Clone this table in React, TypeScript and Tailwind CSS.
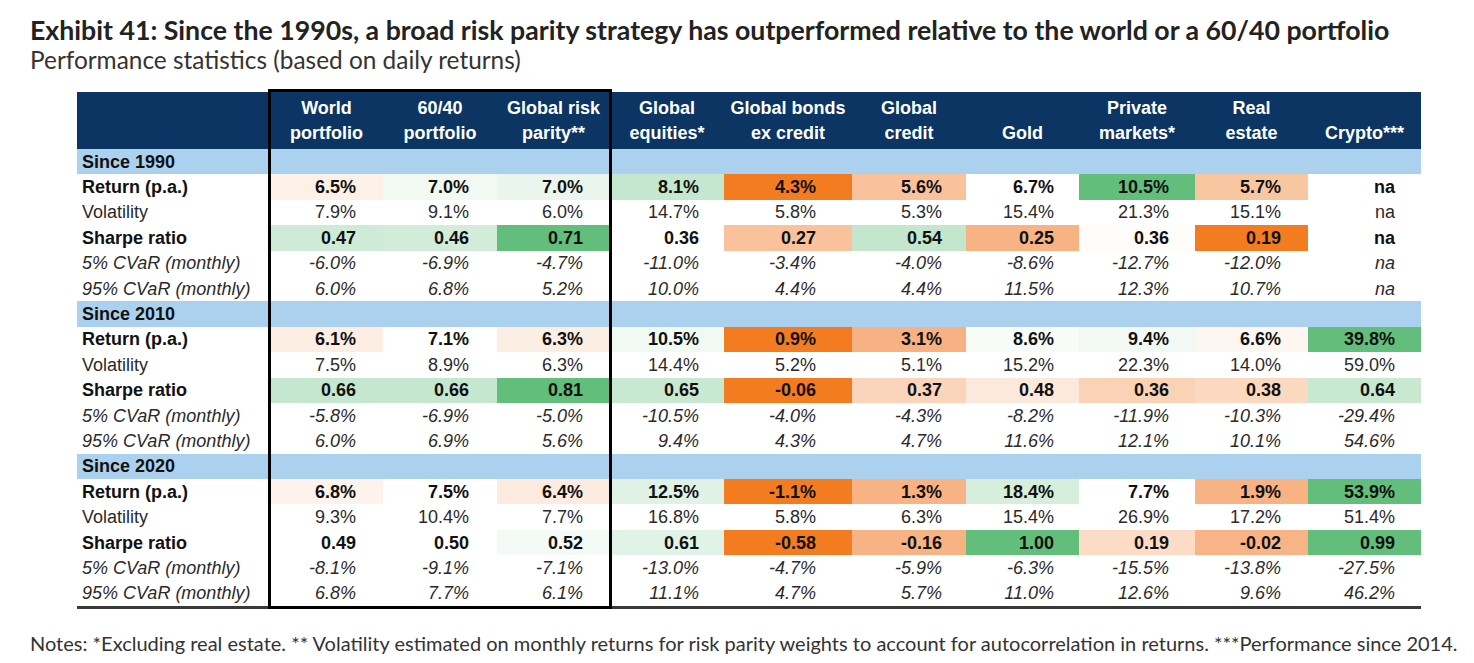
const GRID =
  "grid grid-cols-[193px_113px_114px_113px_114px_128px_114px_113px_116px_113px_113px]";

const PAD = [
  "pr-[27px]",
  "pr-[28px]",
  "pr-[27px]",
  "pr-[25px]",
  "pr-[36px]",
  "pr-[24px]",
  "pr-[25px]",
  "pr-[26px]",
  "pr-[27px]",
  "pr-[26px]",
];

const HEADERS = [
  ["World", "portfolio"],
  ["60/40", "portfolio"],
  ["Global risk", "parity**"],
  ["Global", "equities*"],
  ["Global bonds", "ex credit"],
  ["Global", "credit"],
  ["Gold"],
  ["Private", "markets*"],
  ["Real", "estate"],
  ["Crypto***"],
];

type Row = {
  label: string;
  style: "bold" | "normal" | "italic";
  values: string[];
  fills?: string[];
};

const W = "bg-white";

const SECTIONS: { title: string; rows: Row[] }[] = [
  {
    title: "Since 1990",
    rows: [
      {
        label: "Return (p.a.)",
        style: "bold",
        values: ["6.5%", "7.0%", "7.0%", "8.1%", "4.3%", "5.6%", "6.7%", "10.5%", "5.7%", "na"],
        fills: [
          "bg-[#fdf0e6]",
          "bg-[#f2f9f3]",
          "bg-[#eaf6ed]",
          "bg-[#c6e7cf]",
          "bg-[#f47c20]",
          "bg-[#f9c29c]",
          W,
          "bg-[#63be7b]",
          "bg-[#f9c6a2]",
          W,
        ],
      },
      {
        label: "Volatility",
        style: "normal",
        values: ["7.9%", "9.1%", "6.0%", "14.7%", "5.8%", "5.3%", "15.4%", "21.3%", "15.1%", "na"],
      },
      {
        label: "Sharpe ratio",
        style: "bold",
        values: ["0.47", "0.46", "0.71", "0.36", "0.27", "0.54", "0.25", "0.36", "0.19", "na"],
        fills: [
          "bg-[#cfebd7]",
          "bg-[#d3ecda]",
          "bg-[#63be7b]",
          W,
          "bg-[#f9c29c]",
          "bg-[#c3e6cc]",
          "bg-[#f8b384]",
          "bg-[#fffcfa]",
          "bg-[#f47c20]",
          W,
        ],
      },
      {
        label: "5% CVaR (monthly)",
        style: "italic",
        values: ["-6.0%", "-6.9%", "-4.7%", "-11.0%", "-3.4%", "-4.0%", "-8.6%", "-12.7%", "-12.0%", "na"],
      },
      {
        label: "95% CVaR (monthly)",
        style: "italic",
        values: ["6.0%", "6.8%", "5.2%", "10.0%", "4.4%", "4.4%", "11.5%", "12.3%", "10.7%", "na"],
      },
    ],
  },
  {
    title: "Since 2010",
    rows: [
      {
        label: "Return (p.a.)",
        style: "bold",
        values: ["6.1%", "7.1%", "6.3%", "10.5%", "0.9%", "3.1%", "8.6%", "9.4%", "6.6%", "39.8%"],
        fills: [
          "bg-[#fdede3]",
          W,
          "bg-[#fdeee4]",
          "bg-[#f1f9f3]",
          "bg-[#f47c20]",
          "bg-[#f8b183]",
          "bg-[#f8fcf9]",
          "bg-[#f2f9f4]",
          "bg-[#fef6f1]",
          "bg-[#63be7b]",
        ],
      },
      {
        label: "Volatility",
        style: "normal",
        values: ["7.5%", "8.9%", "6.3%", "14.4%", "5.2%", "5.1%", "15.2%", "22.3%", "14.0%", "59.0%"],
      },
      {
        label: "Sharpe ratio",
        style: "bold",
        values: ["0.66", "0.66", "0.81", "0.65", "-0.06", "0.37", "0.48", "0.36", "0.38", "0.64"],
        fills: [
          "bg-[#c6e7cf]",
          "bg-[#c6e7cf]",
          "bg-[#63be7b]",
          "bg-[#c9e8d1]",
          "bg-[#f47c20]",
          "bg-[#fad5bc]",
          "bg-[#fde9dc]",
          "bg-[#fad2b6]",
          "bg-[#fbd8c0]",
          "bg-[#c8e8d0]",
        ],
      },
      {
        label: "5% CVaR (monthly)",
        style: "italic",
        values: ["-5.8%", "-6.9%", "-5.0%", "-10.5%", "-4.0%", "-4.3%", "-8.2%", "-11.9%", "-10.3%", "-29.4%"],
      },
      {
        label: "95% CVaR (monthly)",
        style: "italic",
        values: ["6.0%", "6.9%", "5.6%", "9.4%", "4.3%", "4.7%", "11.6%", "12.1%", "10.1%", "54.6%"],
      },
    ],
  },
  {
    title: "Since 2020",
    rows: [
      {
        label: "Return (p.a.)",
        style: "bold",
        values: ["6.8%", "7.5%", "6.4%", "12.5%", "-1.1%", "1.3%", "18.4%", "7.7%", "1.9%", "53.9%"],
        fills: [
          "bg-[#fef3ec]",
          W,
          "bg-[#fdebdf]",
          "bg-[#e0f2e5]",
          "bg-[#f47c20]",
          "bg-[#f8b283]",
          "bg-[#d6eedc]",
          W,
          "bg-[#f8b283]",
          "bg-[#63be7b]",
        ],
      },
      {
        label: "Volatility",
        style: "normal",
        values: ["9.3%", "10.4%", "7.7%", "16.8%", "5.8%", "6.3%", "15.4%", "26.9%", "17.2%", "51.4%"],
      },
      {
        label: "Sharpe ratio",
        style: "bold",
        values: ["0.49", "0.50", "0.52", "0.61", "-0.58", "-0.16", "1.00", "0.19", "-0.02", "0.99"],
        fills: [
          W,
          W,
          "bg-[#f4faf5]",
          "bg-[#e1f2e6]",
          "bg-[#f47c20]",
          "bg-[#f8b385]",
          "bg-[#63be7b]",
          "bg-[#fcdcc7]",
          "bg-[#f8b487]",
          "bg-[#63be7b]",
        ],
      },
      {
        label: "5% CVaR (monthly)",
        style: "italic",
        values: ["-8.1%", "-9.1%", "-7.1%", "-13.0%", "-4.7%", "-5.9%", "-6.3%", "-15.5%", "-13.8%", "-27.5%"],
      },
      {
        label: "95% CVaR (monthly)",
        style: "italic",
        values: ["6.8%", "7.7%", "6.1%", "11.1%", "4.7%", "5.7%", "11.0%", "12.6%", "9.6%", "46.2%"],
      },
    ],
  },
];

const styleClass = (s: Row["style"]) =>
  s === "bold" ? "font-bold text-[#111]" : s === "italic" ? "italic text-[#2a2a2a]" : "text-[#2a2a2a]";

const DataRow = ({ row }: { row: Row }) => (
  <div className={`${GRID} h-[25.4px] ${styleClass(row.style)}`}>
    <div className="flex items-center pl-[5px] whitespace-nowrap">{row.label}</div>
    {row.values.map((v, i) => (
      <div
        key={i}
        className={`flex items-center justify-end ${PAD[i]} ${row.fills ? row.fills[i] : W}`}
      >
        {v}
      </div>
    ))}
  </div>
);

export default function App() {
  return (
    <div className="w-[1474px] h-[663px] overflow-hidden bg-white font-['Lato',sans-serif] text-[#1c1c1c]">
      <div className="pl-[30px] pt-[14px]">
        <h1 className="text-[26.7px] leading-[32px] font-bold whitespace-nowrap text-[#222]">
          Exhibit 41: Since the 1990s, a broad risk parity strategy has outperformed relative to the world or a
          60/40 portfolio
        </h1>
        <p className="text-[24.4px] leading-[28px] text-[#333] whitespace-nowrap">
          Performance statistics (based on daily returns)
        </p>
      </div>

      <div className="relative ml-[77px] mt-[18px] w-[1344px] border-b-[3px] border-[#3a3a3a] font-['Liberation_Sans',Arial,sans-serif] text-[18px] leading-none">
        <div className={`${GRID} h-[57px] bg-[#0c3563] text-white font-bold`}>
          <div />
          {HEADERS.map((h, i) => (
            <div key={i} className="flex flex-col justify-end items-center pb-[4px]">
              {h.map((line) => (
                <span key={line} className="leading-[24.5px] whitespace-nowrap">
                  {line}
                </span>
              ))}
            </div>
          ))}
        </div>

        {SECTIONS.map((sec) => (
          <div key={sec.title}>
            <div className="h-[25.4px] bg-[#abd1ef] flex items-center pl-[5px] font-bold text-[#111]">
              {sec.title}
            </div>
            {sec.rows.map((r) => (
              <DataRow key={r.label} row={r} />
            ))}
          </div>
        ))}

        <div className="absolute left-[191px] top-[-3px] bottom-[-3px] w-[344px] border-[3px] border-black pointer-events-none" />
      </div>

      <p className="pl-[30px] mt-[22px] text-[20px] leading-[24px] text-[#333] whitespace-nowrap">
        Notes: *Excluding real estate. ** Volatility estimated on monthly returns for risk parity weights to account
        for autocorrelation in returns. ***Performance since 2014.
      </p>
    </div>
  );
}
